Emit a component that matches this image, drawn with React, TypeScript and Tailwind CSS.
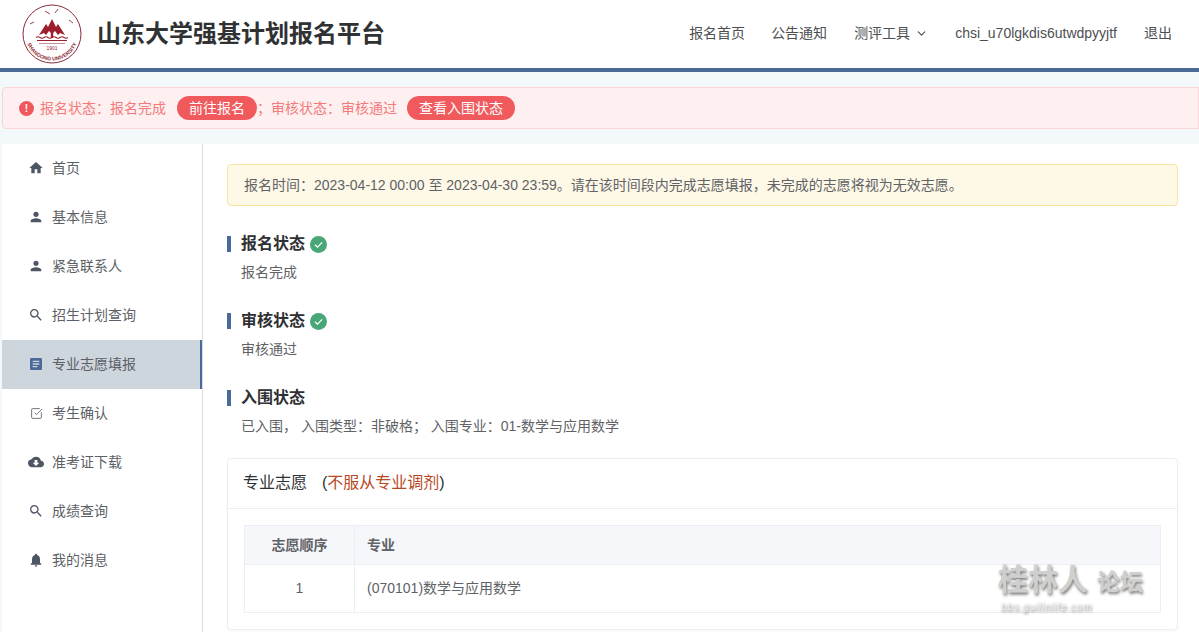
import React from "react";
import { ChevronDown, SquareCheckBig } from "lucide-react";
import { MdArticle, MdCloudDownload, MdHome, MdNotifications, MdPerson, MdSearch } from "react-icons/md";

const CheckIcon = ({ className }: { className?: string }) => (
  <SquareCheckBig size={13} strokeWidth={1.5} className={className} />
);

const MENU = [
  { label: "首页", icon: MdHome },
  { label: "基本信息", icon: MdPerson },
  { label: "紧急联系人", icon: MdPerson },
  { label: "招生计划查询", icon: MdSearch },
  { label: "专业志愿填报", icon: MdArticle, active: true },
  { label: "考生确认", icon: CheckIcon },
  { label: "准考证下载", icon: MdCloudDownload },
  { label: "成绩查询", icon: MdSearch },
  { label: "我的消息", icon: MdNotifications },
];

function Logo() {
  return (
    <svg width="60" height="60" viewBox="0 0 60 60" className="shrink-0">
      <defs>
        <path id="ring" d="M3.5 30a26.5 26.5 0 0 0 53 0" />
      </defs>
      <circle cx="30" cy="30" r="29" fill="#fff" stroke="#8a2a35" strokeWidth="1" />
      <text fontSize="5.2" fontWeight="600" fill="#8a2a35" fontFamily="'Liberation Sans', sans-serif">
        <textPath href="#ring" startOffset="50%" textAnchor="middle">
          SHANDONG UNIVERSITY
        </textPath>
      </text>
      <path d="M17 31l7-11 2 3 4-8 4 8 2-3 7 11-5-2-2 2-3-4-2 2v3h-2v-3l-2-2-3 4-2-2z" fill="#9c1f2e" />
      <path d="M28.8 24h2.4v10h-2.4z" fill="#9c1f2e" />
      <path d="M14 33.5q2-1.4 4 0t4 0 4 0 4 0 4 0 4 0 4 0 4 0M15 36.5h30" stroke="#9c1f2e" strokeWidth="1.1" fill="none" />
      <path d="M17 39.5h26" stroke="#b5626c" strokeWidth="0.7" />
      <text x="30" y="46" fontSize="5" textAnchor="middle" fill="#8a2a35" fontFamily="'Liberation Sans', sans-serif">
        1901
      </text>
      <path d="M23 7l5 3M33 9l3-4M8 20l4-2M47 16l4 3" stroke="#8a2a35" strokeWidth="0.9" fill="none" />
    </svg>
  );
}

function CheckBadge() {
  return (
    <svg width="17" height="17" viewBox="0 0 17 17" className="ml-[5px]">
      <circle cx="8.5" cy="8.5" r="8.5" fill="#48a677" />
      <path d="M5 8.8l2.5 2.4L12.2 6.4" fill="none" stroke="#fff" strokeWidth="1.2" />
    </svg>
  );
}

function StatusBlock({ title, checked, children }: { title: string; checked?: boolean; children: React.ReactNode }) {
  return (
    <section className="h-[77px]">
      <h3 className="flex h-[16px] items-center border-l-4 border-[#4a6a97] pl-[10px] text-[16px] font-bold leading-[16px] text-[#2f3033]">
        {title}
        {checked && <CheckBadge />}
      </h3>
      <p className="mt-[10px] pl-[14px] text-[14px] leading-[20px] text-[#606266]">{children}</p>
    </section>
  );
}

export default function App() {
  return (
    <div className="flex h-[632px] w-[1199px] flex-col overflow-hidden bg-[#f3f8fb] font-['Liberation_Sans','Noto_Sans_CJK_SC',sans-serif]">
      <header className="flex h-[72px] shrink-0 items-center border-b-4 border-[#4a6a97] bg-white pl-[22px] pr-[27px]">
        <Logo />
        <h1 className="ml-[15px] text-[24px] font-bold text-[#303133]">山东大学强基计划报名平台</h1>
        <nav className="ml-auto flex items-center pb-[2px] text-[14px] text-[#4d4f53]">
          <a className="mr-[26px]">报名首页</a>
          <a className="mr-[27px]">公告通知</a>
          <a className="mr-[27px] flex items-center">
            测评工具
            <ChevronDown size={13} className="ml-[5px]" />
          </a>
          <a className="mr-[27px]">chsi_u70lgkdis6utwdpyyjtf</a>
          <a>退出</a>
        </nav>
      </header>

      <div className="ml-[2px] mt-[15px] flex h-[42px] shrink-0 items-center rounded-l-[4px] border border-[#fbd5d5] bg-[#fef0f0] pl-[16px] text-[14px] text-[#f37b7b]">
        <span className="mr-[6px] flex h-[15px] w-[15px] items-center justify-center rounded-full bg-[#f0585c] text-[10px] font-bold text-white">
          !
        </span>
        <span>报名状态：报名完成</span>
        <span className="ml-[11px] rounded-full bg-[#f05a5c] px-[12px] leading-[24px] text-white">前往报名</span>
        <span>；审核状态：审核通过</span>
        <span className="ml-[10px] rounded-full bg-[#f05a5c] px-[12px] leading-[24px] text-white">查看入围状态</span>
      </div>

      <div className="mt-[15px] flex min-h-0 flex-1">
        <aside className="ml-[2px] w-[201px] shrink-0 border-r border-[#d8dce2] bg-white">
          {MENU.map(({ label, icon: Icon, active }) => (
            <div
              key={label}
              className={`flex h-[49px] items-center pb-[1px] pl-[26px] text-[14px] text-[#5c5f66] ${
                active ? "border-r-2 border-[#4a6a97] bg-[#cdd5dd] text-[#4a6a97]" : ""
              }`}
            >
              <span className="flex w-[16px] justify-center">
                <Icon size={16} className={active ? "text-[#4a6a97]" : "text-[#4e5563]"} />
              </span>
              <span className="ml-[8px]">{label}</span>
            </div>
          ))}
        </aside>

        <main className="relative min-w-0 flex-1 bg-white pl-[24px] pr-[21px] pt-[20px]">
          <div className="flex h-[42px] items-center rounded-[4px] border border-[#f8e3a3] bg-[#fef8e7] pl-[16px] text-[14px] text-[#606266]">
            报名时间：2023-04-12 00:00 至 2023-04-30 23:59。请在该时间段内完成志愿填报，未完成的志愿将视为无效志愿。
          </div>

          <div className="mt-[30px]">
            <StatusBlock title="报名状态" checked>
              报名完成
            </StatusBlock>
            <StatusBlock title="审核状态" checked>
              审核通过
            </StatusBlock>
            <StatusBlock title="入围状态">已入围， 入围类型：非破格； 入围专业：01-数学与应用数学</StatusBlock>
          </div>

          <div className="mt-[-9px] h-[172px] rounded-[4px] border border-[#ebeef5] bg-white shadow-[0_1px_3px_rgba(0,0,0,0.04)]">
            <div className="flex h-[50px] items-center border-b border-[#ebeef5] pb-[1px] pl-[15px] text-[16px] text-[#303133]">
              专业志愿
              <span className="ml-[15px]">
                (<span className="text-[#b8491f]">不服从专业调剂</span>)
              </span>
            </div>
            <div className="px-[16px] pt-[16px]">
              <table className="w-full table-fixed border-collapse border border-[#dcdfe6] text-[14px] text-[#606266]">
                <thead>
                  <tr className="h-[39px] bg-[#f5f7fa]">
                    <th className="w-[110px] border border-[#ebeef5] font-bold">志愿顺序</th>
                    <th className="border border-[#ebeef5] pl-[12px] text-left font-bold">专业</th>
                  </tr>
                </thead>
                <tbody>
                  <tr className="h-[48px]">
                    <td className="border border-[#ebeef5] text-center">1</td>
                    <td className="border border-[#ebeef5] pl-[12px]">(070101)数学与应用数学</td>
                  </tr>
                </tbody>
              </table>
            </div>
          </div>

          <div className="absolute left-[795px] top-[418px] select-none whitespace-nowrap text-[#cfcfcf] [text-shadow:1px_2px_3px_#777]">
            <span className="text-[30px] font-bold leading-[36px]">桂林人</span>
            <span className="ml-[9px] text-[23px] font-bold">论坛</span>
            <div className="mt-[2px] pl-[3px] text-[10px] italic leading-[10px] tracking-[0.8px] text-[#eeeeee]">bbs.guilinlife.com</div>
          </div>
        </main>
      </div>
    </div>
  );
}
